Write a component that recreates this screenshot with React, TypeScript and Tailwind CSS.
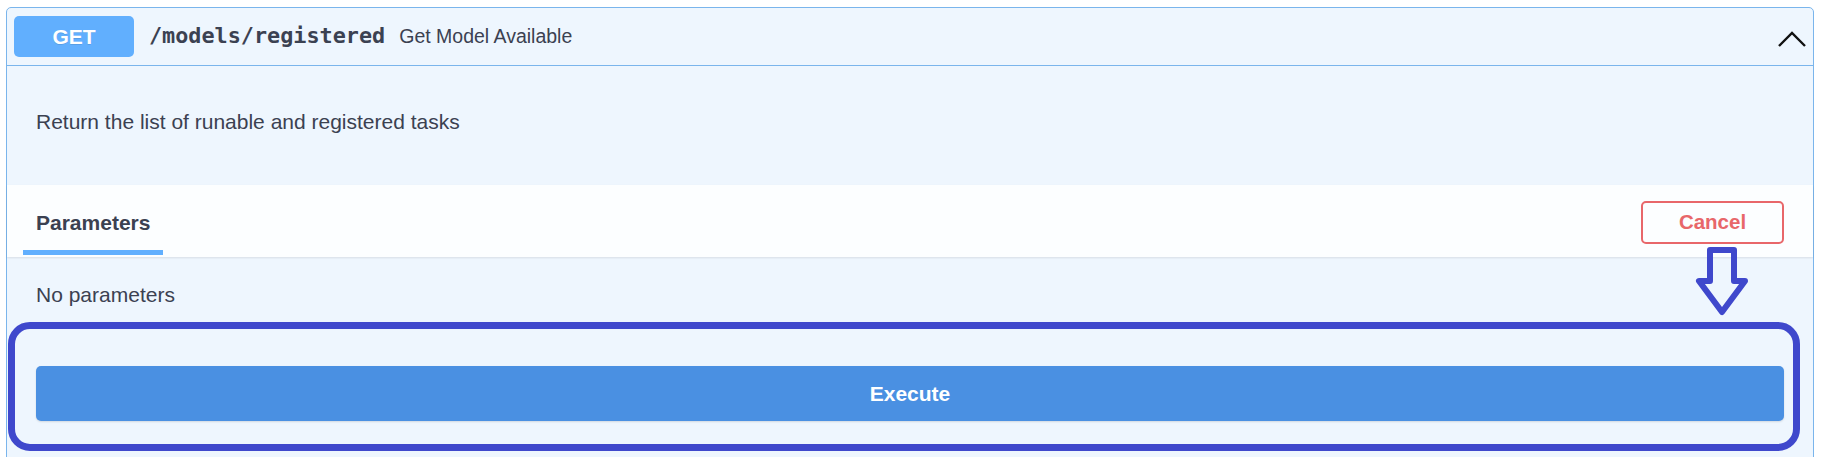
import React from "react";

const sans = "font-['Liberation_Sans',Arial,sans-serif]";

function Chevron() {
  return (
    <svg width="30" height="20" viewBox="0 0 30 20" className="block mt-[4px]">
      <polyline
        points="2,17 15,4 28,17"
        fill="none"
        stroke="#111"
        strokeWidth="2.4"
      />
    </svg>
  );
}

function HollowArrow() {
  return (
    <svg
      width="58"
      height="76"
      viewBox="0 0 58 76"
      className="absolute left-[1687px] top-[236px] z-10"
    >
      <path
        d="M16 6 H40 V37 H51 L28 68 L5 37 H16 Z"
        fill="none"
        stroke="#3f48cc"
        strokeWidth="6"
        strokeLinejoin="round"
      />
    </svg>
  );
}

export default function App() {
  return (
    <div className={`h-[457px] w-[1824px] overflow-hidden bg-white ${sans} text-[#3b4151]`}>
      <div className="ml-[6px] mt-[7px] w-[1808px] h-[470px] relative rounded-t-[5px] border border-[#7ab5ec] bg-[#eef6fe]">
        {/* summary row */}
        <div className="h-[58px] flex items-center justify-between border-b border-[#7ab5ec] pl-[7px] pr-[6px]">
          <div className="flex items-center">
            <div className="w-[120px] h-[41px] rounded-[5px] bg-[#61affe] flex items-center justify-center text-white font-bold text-[21px] [text-shadow:0_1px_0_rgba(0,0,0,0.1)]">
              GET
            </div>
            <span className="ml-[15px] font-['DejaVu_Sans_Mono',monospace] font-bold text-[21.8px] text-[#3b4151]">
              /models/registered
            </span>
            <span className="ml-[14px] text-[19.5px] text-[#3b4151]">
              Get Model Available
            </span>
          </div>
          <Chevron />
        </div>

        {/* description */}
        <div className="h-[119px] pl-[29px] pt-[44px]">
          <p className="text-[21px] leading-[24px]">
            Return the list of runable and registered tasks
          </p>
        </div>

        {/* tab header */}
        <div className="h-[72px] flex items-stretch justify-between bg-[#fcfeff] shadow-[0_1px_2px_rgba(0,0,0,0.1)] pl-[16px] pr-[29px]">
          <div className="flex flex-col px-[13px] pt-[26px]">
            <span className="text-[21px] leading-[24px] font-bold">Parameters</span>
            <div className="mt-[15px] h-[5px] bg-[#61affe] -mx-[13px]" />
          </div>
          <div className="flex items-center pt-[2px]">
            <button className="w-[143px] h-[43px] rounded-[5px] border-2 border-[#e8676a] bg-transparent text-[#e8676a] font-bold text-[20.5px]">
              Cancel
            </button>
          </div>
        </div>

        {/* body */}
        <div className="pl-[29px] pr-[29px] pt-[26px]">
          <p className="text-[21px] leading-[24px]">No parameters</p>
          <button className="mt-[59px] w-full h-[55px] rounded-[5px] bg-[#4a90e2] text-white font-bold text-[21px] shadow-[0_1px_2px_rgba(0,0,0,0.12)]">
            Execute
          </button>
        </div>

        {/* annotation overlays */}
        <div className="absolute left-[1px] top-[314px] w-[1792px] h-[129px] rounded-[22px] border-[7px] border-[#3f48cc] pointer-events-none" />
        <HollowArrow />
      </div>
    </div>
  );
}
